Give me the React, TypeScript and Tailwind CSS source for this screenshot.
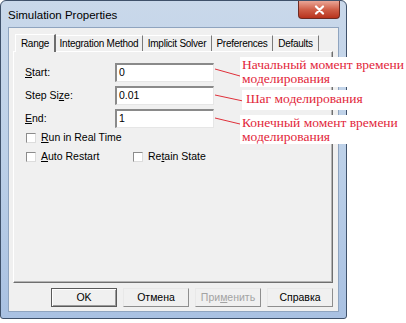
import React from 'react';

const ui = { fontFamily: '"Liberation Sans", Arial, sans-serif' };
const serif = { fontFamily: '"Liberation Serif", "Times New Roman", serif' };

const tabs = [
    { label: 'Range', w: 'w-[41px]', active: true },
    { label: 'Integration Method', w: 'w-[87px]' },
    { label: 'Implicit Solver', w: 'w-[69px]' },
    { label: 'Preferences', w: 'w-[61px]' },
    { label: 'Defaults', w: 'w-[46px]' },
];

const Field: React.FC<{ label: React.ReactNode; value: string }> = ({ label, value }) => (
    <div className="flex items-center h-[19px]">
        <div className="w-[90px] text-[10.5px] text-black whitespace-nowrap">{label}</div>
        <div className="w-[99px] h-[19px] bg-white border-t-2 border-l-2 border-t-[#8a8a8a] border-l-[#8a8a8a] border-r border-b border-r-[#e6e6e6] border-b-[#e6e6e6] flex items-center pl-[2px] text-[10.5px] text-black">
            {value}
        </div>
    </div>
);

const Check: React.FC<{ children: React.ReactNode; className?: string }> = ({ children, className }) => (
    <div className={`flex items-center h-[14px] ${className ?? ''}`}>
        <div className="w-[10px] h-[10px] bg-white border-t border-l border-t-[#8c8c8c] border-l-[#8c8c8c] border-r border-b border-r-[#dcdcdc] border-b-[#dcdcdc] ml-[1px]" />
        <span className="ml-[5px] text-[10.5px] text-black whitespace-nowrap">{children}</span>
    </div>
);

const Btn: React.FC<{ children: React.ReactNode; def?: boolean; disabled?: boolean }> = ({ children, def, disabled }) => (
    <div
        className={`w-[66px] h-[19px] flex items-center justify-center text-[10.5px] bg-[#f0f0f0] ${
            def ? 'border border-[#5a5a5a] shadow-[inset_1px_1px_0_#fff,inset_-1px_-1px_0_#9a9a9a]' : 'border border-t-[#e8e8e8] border-l-[#e8e8e8] border-r-[#8e8e8e] border-b-[#8e8e8e]'
        } ${disabled ? 'text-[#a3a3a3]' : 'text-black'}`}
    >
        {children}
    </div>
);

const App: React.FC = () => {
    return (
        <div className="relative w-[406px] h-[323px] bg-white overflow-hidden" style={ui}>
            {/* dialog window */}
            <div className="w-[347px] h-[319px] rounded-t-[6px] rounded-b-[3px] border border-[#3f516a] bg-gradient-to-b from-[#c9d8ea] via-[#bcd0e8] to-[#a9c1e2] flex flex-col px-[7px] pb-[6px]">
                <div className="h-[26px] flex items-start justify-between">
                    <span className="mt-[6px] text-[11.5px] text-black">Simulation Properties</span>
                    <div className="w-[42px] h-[18px] -mr-[1px] rounded-b-[4px] border border-t-0 border-[#6e2b22] bg-gradient-to-b from-[#e9a596] via-[#cf5f48] to-[#b8321c] flex items-center justify-center">
                        <svg width="11" height="10" viewBox="0 0 11 10">
                            <path d="M2 1.5 L9 8.5 M9 1.5 L2 8.5" stroke="#fff" strokeWidth="2.2" strokeLinecap="round" />
                        </svg>
                    </div>
                </div>
                <div className="flex-1 bg-[#f0f0f0] border border-[#8fa4bf] flex flex-col pl-[4px] pr-[5px]">
                    {/* tabs */}
                    <div className="mt-[5px] h-[18px] flex items-end pl-[2px]">
                        {tabs.map((t) => (
                            <div
                                key={t.label}
                                className={`${t.w} flex items-center justify-center whitespace-nowrap text-[10px] tracking-[-0.25px] text-black ${
                                    t.active
                                        ? 'h-[18px] relative z-10 bg-[#f0f0f0] border-l border-t border-l-white border-t-white border-r-2 border-r-[#6d6d6d] -mb-[1px]'
                                        : 'h-[16px] border-r border-r-[#7a7a7a] border-t border-t-white'
                                }`}
                            >
                                {t.label}
                            </div>
                        ))}
                    </div>
                    {/* tab panel */}
                    <div className="h-[232px] border border-t-white border-l-white border-r-[#6f6f6f] border-b-[#6f6f6f] shadow-[inset_-1px_-1px_0_#b4b4b4] flex flex-col pl-[11px] pt-[11px]">
                        <div className="flex flex-col gap-[4px]">
                            <Field label={<><u>S</u>tart:</>} value="0" />
                            <Field label={<>Step Si<u>z</u>e:</>} value="0.01" />
                            <Field label={<><u>E</u>nd:</>} value="1" />
                        </div>
                        <div className="mt-[3px] flex flex-col gap-[5px]">
                            <Check><u>R</u>un in Real Time</Check>
                            <div className="flex">
                                <Check className="w-[107px]"><u>A</u>uto Restart</Check>
                                <Check>Re<u>t</u>ain State</Check>
                            </div>
                        </div>
                    </div>
                    {/* buttons */}
                    <div className="mt-[5px] flex justify-end gap-[6px]">
                        <Btn def>OK</Btn>
                        <Btn>Отмена</Btn>
                        <Btn disabled>При<u>м</u>енить</Btn>
                        <Btn>Справка</Btn>
                    </div>
                </div>
            </div>

            {/* annotations */}
            <svg className="absolute left-0 top-0" width="406" height="323">
                <line x1="215" y1="69" x2="240" y2="76" stroke="#e0303a" strokeWidth="1" />
                <line x1="215" y1="95" x2="243" y2="101" stroke="#e0303a" strokeWidth="1" />
                <line x1="215" y1="118" x2="240" y2="124" stroke="#e0303a" strokeWidth="1" />
            </svg>
            <div className="absolute left-[240px] top-[57px] w-[166px] h-[30px] bg-white pl-[2px] pt-[1px] whitespace-nowrap text-[13.5px] leading-[14px] text-[#e2263a]" style={serif}>
                Начальный момент времени<br />моделирования
            </div>
            <div className="absolute left-[242px] top-[90px] w-[120px] h-[20px] bg-white pl-[4px] pt-[2px] whitespace-nowrap text-[13.5px] leading-[14px] text-[#e2263a]" style={serif}>
                Шаг моделирования
            </div>
            <div className="absolute left-[240px] top-[115px] w-[166px] h-[29px] bg-white pl-[2px] pt-[1px] whitespace-nowrap text-[13.5px] leading-[14px] text-[#e2263a]" style={serif}>
                Конечный момент времени<br />моделирования
            </div>
        </div>
    );
};

export default App;
